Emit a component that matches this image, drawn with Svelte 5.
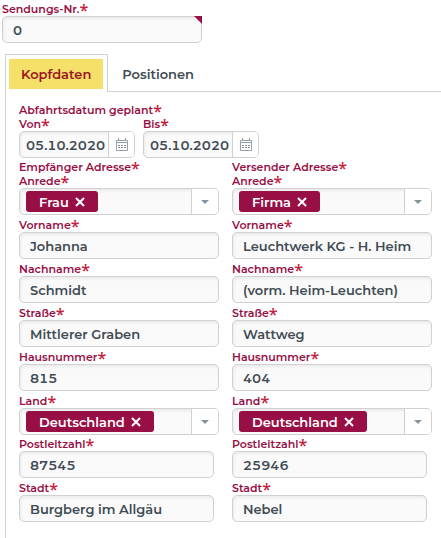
<script>
  let orderNumber = $state('0');
  let activeTab = $state('Kopfdaten');
  const tabs = ['Kopfdaten', 'Positionen'];

  const salutations = ['Frau', 'Herr', 'Firma'];
  const countries = ['Deutschland', 'Österreich', 'Schweiz'];

  let dates = $state([
    { id: 'from', label: 'Von', value: '05.10.2020' },
    { id: 'to', label: 'Bis', value: '05.10.2020' },
  ]);

  let addresses = $state([
    {
      id: 'recipient',
      title: 'Empfänger Adresse',
      salutation: 'Frau',
      firstName: 'Johanna',
      lastName: 'Schmidt',
      street: 'Mittlerer Graben',
      houseNumber: '815',
      country: 'Deutschland',
      zip: '87545',
      city: 'Burgberg im Allgäu',
    },
    {
      id: 'sender',
      title: 'Versender Adresse',
      salutation: 'Firma',
      firstName: 'Leuchtwerk KG - H. Heim',
      lastName: '(vorm. Heim-Leuchten)',
      street: 'Wattweg',
      houseNumber: '404',
      country: 'Deutschland',
      zip: '25946',
      city: 'Nebel',
    },
  ]);

  function pick(event, address, key) {
    if (event.currentTarget.value) {
      address[key] = event.currentTarget.value;
    }
    event.currentTarget.value = '';
  }
</script>

{#snippet star()}<span class="star" aria-hidden="true">*</span>{/snippet}

{#snippet textField(address, key, label)}
  <div class="field">
    <label for="{address.id}-{key}">{label}{@render star()}</label>
    <input class="text" id="{address.id}-{key}" type="text" required bind:value={address[key]} />
  </div>
{/snippet}

{#snippet tagField(address, key, label, options)}
  <div class="field">
    <label for="{address.id}-{key}">{label}{@render star()}</label>
    <div class="control">
      <div class="tags">
        {#if address[key]}
          <span class="tag">
            {address[key]}
            <button type="button" aria-label="{address[key]} entfernen" onclick={() => (address[key] = '')}>
              <svg viewBox="0 0 10 10" width="10" height="10">
                <path d="M1 1l8 8M9 1l-8 8" fill="none" stroke="currentColor" stroke-width="2" />
              </svg>
            </button>
          </span>
        {/if}
      </div>
      <div class="addon">
        <select id="{address.id}-{key}" onchange={(event) => pick(event, address, key)}>
          <option value=""></option>
          {#each options as option}
            <option>{option}</option>
          {/each}
        </select>
        <svg class="arrow" viewBox="0 0 8 4" width="8" height="4">
          <path d="M0 0h8L4 4z" fill="#87929a" />
        </svg>
      </div>
    </div>
  </div>
{/snippet}

<main>
  <div class="order">
    <label for="order-number">Sendungs-Nr.{@render star()}</label>
    <div class="flagged">
      <input class="text" id="order-number" type="text" required bind:value={orderNumber} />
    </div>
  </div>

  <div class="tabs" role="tablist">
    {#each tabs as tab}
      <button
        type="button"
        role="tab"
        class="tab"
        class:active={activeTab === tab}
        aria-selected={activeTab === tab}
        onclick={() => (activeTab = tab)}
      >
        <span>{tab}</span>
      </button>
    {/each}
  </div>

  <div class="panel" role="tabpanel">
    {#if activeTab === 'Kopfdaten'}
      <h2>Abfahrtsdatum geplant{@render star()}</h2>
      <div class="dates">
        {#each dates as date}
          <div class="date">
            <label for={date.id}>{date.label}{@render star()}</label>
            <div class="control">
              <input id={date.id} type="text" required bind:value={date.value} />
              <button class="addon" type="button" aria-label="Kalender öffnen">
                <svg viewBox="0 0 12 13" width="12" height="13">
                  <path d="M.5 2.5h11v10H.5zM.5 4.5h11M2.5 0v2.5M9.5 0v2.5" fill="none" stroke="#98a1a8" />
                  <path
                    d="M2 7h2v1H2zM5 7h2v1H5zM8 7h2v1H8zM2 9h2v1H2zM5 9h2v1H5zM8 9h2v1H8z"
                    fill="#87929a"
                  />
                </svg>
              </button>
            </div>
          </div>
        {/each}
      </div>

      <div class="addresses">
        {#each addresses as address}
          <section>
            <h2>{address.title}{@render star()}</h2>
            <div class="fields">
              {@render tagField(address, 'salutation', 'Anrede', salutations)}
              {@render textField(address, 'firstName', 'Vorname')}
              {@render textField(address, 'lastName', 'Nachname')}
              {@render textField(address, 'street', 'Straße')}
              {@render textField(address, 'houseNumber', 'Hausnummer')}
              {@render tagField(address, 'country', 'Land', countries)}
            </div>
            <div class="fields town">
              {@render textField(address, 'zip', 'Postleitzahl')}
              {@render textField(address, 'city', 'Stadt')}
            </div>
          </section>
        {/each}
      </div>
    {/if}
  </div>
</main>

<style>
  :global(body) {
    margin: 0;
    background: #fff;
  }

  main {
    --wine: #970f45;
    --line: #d1d1d1;
    --text: #414b53;
    display: flex;
    flex-direction: column;
    min-height: 100vh;
    box-sizing: border-box;
    padding-top: 2px;
    color: var(--text);
    font-family: Montserrat, Inter, sans-serif;
    font-size: 13px;
    font-weight: 600;
    font-variant-numeric: tabular-nums;
  }

  input,
  button,
  select {
    box-sizing: border-box;
    margin: 0;
    padding: 0;
    border: 0;
    background: none;
    color: inherit;
    font: inherit;
    font-variant-numeric: inherit;
  }

  button {
    cursor: pointer;
  }

  label,
  h2 {
    display: block;
    margin: 0;
    color: var(--wine);
    font-size: 11px;
    font-weight: 600;
    line-height: 14px;
    white-space: nowrap;
  }

  h2 {
    line-height: 13px;
  }

  .star {
    color: #c4213c;
    font-family: "Open Sans", sans-serif;
    font-size: 16px;
    line-height: 0;
    vertical-align: -3px;
  }

  .text,
  .control {
    box-sizing: border-box;
    width: 100%;
    height: 27px;
    border: 1px solid var(--line);
    border-radius: 5px;
    background: #fafafa;
    box-shadow: inset 1px 2px 3px #ebebeb;
  }

  .text {
    display: block;
    padding: 0 10px;
  }

  .order {
    width: 200px;
    margin-left: 2px;
  }

  .flagged {
    position: relative;
  }

  /* corner marker */
  .flagged::after {
    content: '';
    position: absolute;
    top: 0;
    right: 0;
    border-top: 8px solid var(--wine);
    border-left: 8px solid transparent;
  }

  .tabs {
    display: flex;
    height: 38px;
    margin: 11px 0 0 5px;
    box-shadow: inset 0 -1px var(--line);
  }

  .tab {
    padding: 3px 3px 3px 1px;
    border: 1px solid transparent;
    border-bottom: 0;
  }

  .tab span {
    display: block;
    padding: 0 12px;
    line-height: 30px;
  }

  .tab.active {
    padding: 3px 4px 3px 3px;
    border-color: var(--line);
    background: #fff;
    color: #9c1523;
  }

  .tab.active span {
    background: #f5e069;
  }

  .panel {
    flex: 1;
    margin-left: 5px;
    padding: 12px 9px 15px 13px;
    border-left: 1px solid var(--line);
  }

  .dates {
    display: flex;
    gap: 8px;
    margin-bottom: 3px;
  }

  .date {
    width: 116px;
  }

  .control {
    display: flex;
    overflow: hidden;
  }

  .control > input {
    flex: 1;
    min-width: 0;
    padding-left: 6px;
  }

  .addon {
    position: relative;
    display: flex;
    flex: none;
    align-items: center;
    justify-content: center;
    width: 26px;
    border-left: 1px solid var(--line);
    background: #fff;
  }

  .addon select {
    width: 100%;
    height: 100%;
    appearance: none;
    cursor: pointer;
  }

  .arrow {
    position: absolute;
    pointer-events: none;
  }

  .tags {
    display: flex;
    flex: 1;
    align-items: center;
    min-width: 0;
    padding-left: 6px;
  }

  .tag {
    display: flex;
    align-items: center;
    gap: 6px;
    height: 21px;
    padding: 0 13px;
    border-radius: 3px;
    background: var(--wine);
    color: #fff;
  }

  .tag button {
    display: flex;
  }

  .addresses {
    display: grid;
    grid-template-columns: repeat(2, minmax(0, 1fr));
    gap: 13px;
  }

  .fields {
    display: grid;
    gap: 3px;
  }

  .town {
    margin-top: 2px;
    padding-right: 5px;
  }
</style>
